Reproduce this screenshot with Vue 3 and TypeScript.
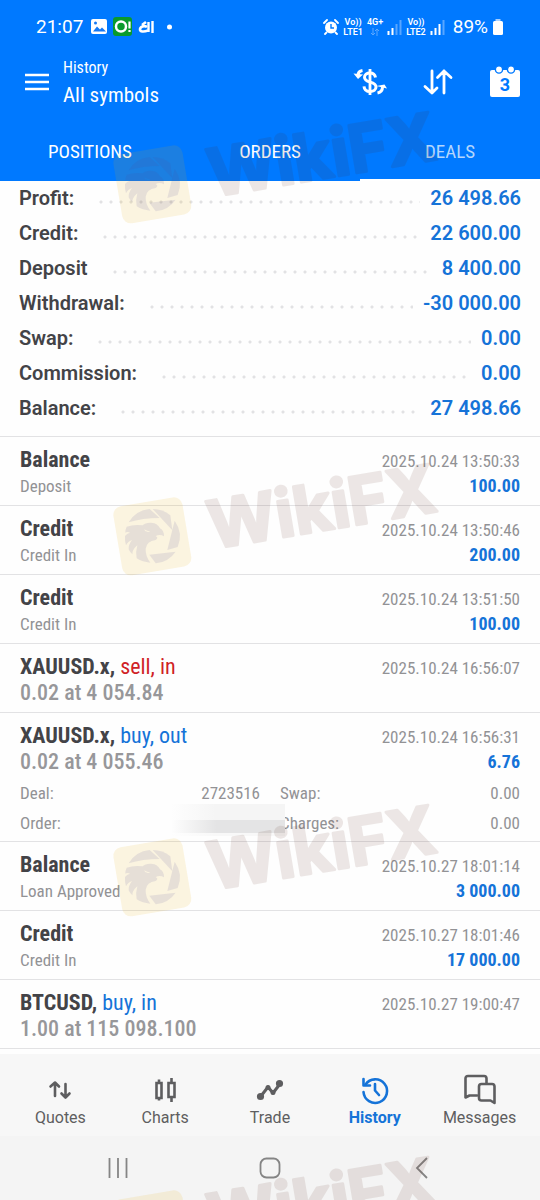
<script setup lang="ts">
import { ref } from 'vue'

interface SummaryLine {
  label: string
  value: string
}

interface Detail {
  label: string
  value: string
  hidden?: boolean
}

interface Deal {
  title: string
  action?: string
  side?: 'buy' | 'sell'
  note: string
  time: string
  amount?: string
  details?: Detail[]
}

const tabs = ['POSITIONS', 'ORDERS', 'DEALS']
const activeTab = ref('DEALS')

const summary: SummaryLine[] = [
  { label: 'Profit:', value: '26 498.66' },
  { label: 'Credit:', value: '22 600.00' },
  { label: 'Deposit', value: '8 400.00' },
  { label: 'Withdrawal:', value: '-30 000.00' },
  { label: 'Swap:', value: '0.00' },
  { label: 'Commission:', value: '0.00' },
  { label: 'Balance:', value: '27 498.66' },
]

const deals: Deal[] = [
  { title: 'Balance', note: 'Deposit', time: '2025.10.24 13:50:33', amount: '100.00' },
  { title: 'Credit', note: 'Credit In', time: '2025.10.24 13:50:46', amount: '200.00' },
  { title: 'Credit', note: 'Credit In', time: '2025.10.24 13:51:50', amount: '100.00' },
  { title: 'XAUUSD.x,', action: 'sell, in', side: 'sell', note: '0.02 at 4 054.84', time: '2025.10.24 16:56:07' },
  {
    title: 'XAUUSD.x,',
    action: 'buy, out',
    side: 'buy',
    note: '0.02 at 4 055.46',
    time: '2025.10.24 16:56:31',
    amount: '6.76',
    details: [
      { label: 'Deal:', value: '2723516' },
      { label: 'Swap:', value: '0.00' },
      { label: 'Order:', value: '', hidden: true },
      { label: 'Charges:', value: '0.00' },
    ],
  },
  { title: 'Balance', note: 'Loan Approved', time: '2025.10.27 18:01:14', amount: '3 000.00' },
  { title: 'Credit', note: 'Credit In', time: '2025.10.27 18:01:46', amount: '17 000.00' },
  { title: 'BTCUSD,', action: 'buy, in', side: 'buy', note: '1.00 at 115 098.100', time: '2025.10.27 19:00:47' },
]

const sections = ['Quotes', 'Charts', 'Trade', 'History', 'Messages']
const activeSection = ref('History')
const marks = [1, 2, 3, 4]
</script>

<template>
  <div class="screen">
    <header class="top">
      <div class="status">
        <span class="clock">21:07</span>
        <svg class="notices" width="84" height="20" viewBox="0 0 84 20" aria-hidden="true">
          <rect x="0" y="2" width="16" height="15" rx="2" fill="#fff" />
          <path d="M2 14.500l4-5 3 3 2-2 4 4z" fill="#1479f5" />
          <circle cx="4.500" cy="6" r="1.500" fill="#1479f5" />
          <rect x="22" y="0" width="19" height="19" rx="3" fill="#0a9a2c" />
          <circle cx="30" cy="9.500" r="5" fill="none" stroke="#fff" stroke-width="2.500" />
          <path d="M38.500 4.500v7M38.500 13v2" stroke="#fff" stroke-width="2.200" />
          <path d="M61.500 4v12M57.500 5v10" stroke="#fff" stroke-width="2.400" />
          <path d="M56 10c-3-2-7 0-7 2.500s4 2.500 8 1M51 8l4-3" fill="none" stroke="#fff" stroke-width="2.600" />
          <circle cx="78.500" cy="10" r="2.500" fill="#fff" />
        </svg>
        <span class="grow"></span>
        <svg class="alarm" width="16" height="16" viewBox="0 0 16 16" aria-hidden="true">
          <circle cx="8" cy="8.500" r="6" fill="#fff" />
          <path d="M1 4l3-3M15 4l-3-3M3.500 13.500L2 15M12.500 13.500L14 15" stroke="#fff" stroke-width="1.800" stroke-linecap="round" />
          <path d="M8 5v4h3" fill="none" stroke="#0079ff" stroke-width="1.400" />
        </svg>
        <span class="tiny">Vo))<br />LTE1</span>
        <span class="tiny net">4G+
          <svg width="10" height="8" viewBox="0 0 10 8" aria-hidden="true">
            <path d="M3 0v7M1 5l2 2 2-2M7 8V1M5 3l2-2 2 2" fill="none" stroke="#5ca8ff" />
          </svg>
        </span>
        <svg class="signal" width="15" height="16" viewBox="0 0 15 16" aria-hidden="true">
          <path d="M1.500 16v-4M5.500 16V9" stroke="#fff" stroke-width="2" />
          <path d="M9.500 16V5M13.500 16V1" stroke="#58a6ff" stroke-width="2" />
        </svg>
        <span class="tiny">Vo))<br />LTE2</span>
        <svg class="signal" width="15" height="16" viewBox="0 0 15 16" aria-hidden="true">
          <path d="M1.500 16v-4M5.500 16V9M9.500 16V5" stroke="#fff" stroke-width="2" />
          <path d="M13.500 16V1" stroke="#58a6ff" stroke-width="2" />
        </svg>
        <span class="clock charge">89%</span>
        <svg width="12" height="18" viewBox="0 0 12 18" aria-hidden="true">
          <path d="M3.500 1h5v2h-5z" fill="#a9d0ff" />
          <rect x="1" y="3" width="10" height="14" rx="1.500" fill="#fff" />
        </svg>
      </div>

      <div class="bar">
        <button class="icon-button" type="button" aria-label="Menu">
          <svg width="24" height="18" viewBox="0 0 24 18"><path d="M0 2h24M0 9h24M0 16h24" stroke="#fff" stroke-width="2.600" /></svg>
        </button>
        <h1 class="heading"><small>History</small>All symbols</h1>
        <div class="tools">
          <button class="icon-button" type="button" aria-label="Currency">
            <svg width="34" height="32" viewBox="0 0 34 32" fill="none" stroke="#fff" stroke-width="3">
              <path d="M22.500 11.500c-.5-3-2.500-4.500-5.500-4.500-3.300 0-5.500 1.700-5.500 4.300 0 3 2.700 4 5.700 4.800 3.300.9 5.800 1.900 5.800 5 0 2.700-2.500 4.400-5.800 4.400-3.500 0-5.900-1.900-6.200-5.200" />
              <path d="M17 3v26" stroke-width="2.800" />
              <path d="M9.500 4.500C6.500 5 5 7 5 9.500M24.500 27c4-.8 5-3 5-6" stroke-width="3" />
              <path d="M.5 7.500L5 13l5-4.500zM23.500 20l8-1.500 2.500 4z" fill="#fff" stroke="none" />
            </svg>
          </button>
          <button class="icon-button" type="button" aria-label="Sort">
            <svg width="30" height="28" viewBox="0 0 30 28" fill="none" stroke="#fff" stroke-width="2.800" stroke-linecap="round" stroke-linejoin="round">
              <path d="M9 3v22M2 18.500L9 25l5-5M21 25V3M14.500 9.500L21 3l7 6.500" />
            </svg>
          </button>
          <button class="icon-button" type="button" aria-label="Period">
            <svg width="32" height="34" viewBox="0 0 32 34">
              <rect x="1" y="5" width="30" height="27" rx="2" fill="#fff" />
              <g fill="#fff" stroke="#0079ff" stroke-width="1.400"><circle cx="10" cy="4.500" r="3.600" /><circle cx="22" cy="4.500" r="3.600" /></g>
              <text class="day" x="16" y="26" text-anchor="middle">3</text>
            </svg>
          </button>
        </div>
      </div>

      <nav class="tabs">
        <button
          v-for="tab in tabs"
          :key="tab"
          type="button"
          class="tab"
          :class="{ active: tab === activeTab }"
          @click="activeTab = tab"
        >{{ tab }}</button>
      </nav>
    </header>

    <main class="content">
      <dl class="summary">
        <div v-for="line in summary" :key="line.label" class="line">
          <dt>{{ line.label }}</dt>
          <span class="leader"></span>
          <dd>{{ line.value }}</dd>
        </div>
      </dl>

      <ul class="deals">
        <li v-for="deal in deals" :key="deal.time" class="deal">
          <div class="row">
            <span class="title"><b>{{ deal.title }}</b><span v-if="deal.action" :class="deal.side">&nbsp;{{ deal.action }}</span></span>
            <time class="time">{{ deal.time }}</time>
          </div>
          <div class="row second">
            <span :class="deal.side ? 'volume' : 'note'">{{ deal.note }}</span>
            <span v-if="deal.amount" class="amount">{{ deal.amount }}</span>
          </div>
          <dl v-if="deal.details" class="details">
            <div v-for="item in deal.details" :key="item.label" class="detail">
              <dt>{{ item.label }}</dt>
              <dd>{{ item.value }}<span v-if="item.hidden" class="mask"></span></dd>
            </div>
          </dl>
        </li>
      </ul>
    </main>

    <nav class="sections">
      <button
        v-for="name in sections"
        :key="name"
        type="button"
        class="section"
        :class="{ active: name === activeSection }"
        @click="activeSection = name"
      >
        <svg width="36" height="32" viewBox="0 0 36 32" fill="none" stroke="currentColor" stroke-width="2.600" stroke-linecap="round" stroke-linejoin="round" aria-hidden="true">
          <path v-if="name === 'Quotes'" d="M13 22V9M8.500 12.500L13 8.500l4 4M23.500 10v13M19.500 19.500l4 4 4-4" />
          <g v-else-if="name === 'Charts'" stroke-linecap="butt" stroke-linejoin="miter">
            <path d="M9.500 9h5v15h-5zM12 5.500V9M12 24v2.500M21.500 9h6v14h-6zM24.500 4v5M24.500 23v5" />
          </g>
          <g v-else-if="name === 'Trade'">
            <path d="M9 22l7-9 5 6 7-9" stroke-width="3" />
            <g fill="currentColor" stroke-width="2"><circle cx="8.500" cy="22.500" r="2.600" /><circle cx="16" cy="13.500" r="1.500" /><circle cx="21" cy="18.500" r="1.500" /><circle cx="27.500" cy="9.500" r="2.600" /></g>
          </g>
          <g v-else-if="name === 'History'">
            <path d="M8.500 10.500A11.800 11.800 0 1 1 6.500 18" />
            <path d="M6.500 5v6.500H13M18 10v6.500l4 4.500" />
          </g>
          <g v-else>
            <path d="M15 21.500H7.500L3.500 23.500V4.500Q3.500 2 6 2H22q2.500 0 2.500 2.500V9" />
            <path d="M19.500 10h10.500q2.500 0 2.500 2.500V29l-4-2.500h-9q-2.500 0-2.500-2.500V12.500q0-2.500 2.500-2.500z" />
          </g>
        </svg>
        <span>{{ name }}</span>
      </button>
    </nav>

    <div class="system">
      <button type="button" aria-label="Recent apps">
        <svg width="22" height="22" viewBox="0 0 22 22"><path d="M2.500 1v20M11 1v20M19.500 1v20" stroke="#858585" stroke-width="1.800" /></svg>
      </button>
      <button type="button" aria-label="Home">
        <svg width="22" height="22" viewBox="0 0 22 22"><rect x="1.500" y="1.500" width="19" height="19" rx="6" fill="none" stroke="#858585" stroke-width="1.800" /></svg>
      </button>
      <button type="button" aria-label="Back">
        <svg width="22" height="22" viewBox="0 0 22 22"><path d="M16 1L6 11l10 10" fill="none" stroke="#858585" stroke-width="1.800" /></svg>
      </button>
    </div>

    <div class="marks" aria-hidden="true">
      <svg v-for="n in marks" :key="n" class="mark" width="440" height="220" viewBox="0 -40 440 220">
        <g transform="translate(10 49) scale(.3333)">
          <rect x="22" y="28" width="210" height="210" rx="26" transform="rotate(-9.500 127 133)" fill="#e6ac05" fill-opacity=".12" />
          <g fill="#50469a" fill-opacity=".12">
            <path d="M56 91A82 82 0 0 1 119 51L149 78Q98 78 56 91z" />
            <path d="M128 51A82 82 0 0 1 181 70L187 115z" />
            <path d="M194 86A82 82 0 0 1 203 165L172 174z" />
            <path d="M118 188L197 179A82 82 0 0 1 137 214z" />
            <path d="M50 104Q72 96 98 100Q106 91 124 92Q144 94 150 109Q162 115 162 133Q150 126 137 132Q147 137 137 144Q110 148 107 170Q106 192 121 212Q98 210 80 199Q76 180 82 160Q66 174 67 187Q60 181 56 172Q55 158 66 144Q52 150 48 160Q44 146 45 132Q50 125 60 122Q52 118 46 122Q46 112 50 104zM102 112Q106 123 121 119Q112 117 102 112z" fill-rule="evenodd" />
          </g>
        </g>
        <text class="brand" transform="translate(112 106) rotate(-9.500)">WikiFX</text>
      </svg>
    </div>
  </div>
</template>

<style>
body {
  margin: 0;
  background: #fefefe;
}
</style>

<style scoped>
.screen {
  position: relative;
  display: flex;
  flex-direction: column;
  min-height: 100vh;
  overflow: hidden;
  background: #fefefe;
  color: #434347;
  font-family: Roboto, "Liberation Sans", sans-serif;
}

button {
  margin: 0;
  padding: 0;
  border: 0;
  background: none;
  color: inherit;
  font: inherit;
  cursor: pointer;
}

svg {
  display: block;
  flex: none;
}

dl, dd, ul, h1 {
  margin: 0;
  padding: 0;
}

.top {
  background: #0079ff;
  color: #fff;
}

.status {
  display: flex;
  align-items: center;
  gap: 4px;
  padding: 14px 36px 0;
  height: 26px;
}

.clock {
  font-size: 19px;
  line-height: 26px;
}

.notices {
  margin-left: 4px;
}

.grow {
  flex: 1;
}

.tiny {
  font-size: 9px;
  line-height: 10px;
  font-weight: 600;
  text-align: center;
}

.net svg {
  margin: 1px auto;
}

.charge {
  margin-left: 4px;
}

.bar {
  display: flex;
  align-items: center;
  padding: 15px 19px 9px 25px;
}

.icon-button {
  display: flex;
}

.heading {
  flex: 1;
  margin-left: 14px;
  font-family: "Roboto Condensed", "Liberation Sans Narrow", Roboto, sans-serif;
  font-size: 21px;
  line-height: 28px;
  font-weight: 400;
}

.heading small {
  display: block;
  font-size: 16px;
  line-height: 26px;
}

.tools {
  display: flex;
  align-items: center;
  gap: 36px;
}

.day {
  fill: #0079ff;
  font-family: Roboto, sans-serif;
  font-size: 18px;
  font-weight: 700;
}

.tabs {
  display: grid;
  grid-template-columns: repeat(3, 1fr);
}

.tab {
  padding: 20px 0 14px;
  border-bottom: 2px solid #0079ff;
  font-family: "Roboto Condensed", "Liberation Sans Narrow", Roboto, sans-serif;
  font-size: 19px;
  line-height: 27px;
}

.tab.active {
  border-color: #fff;
  color: #b4d6fc;
}

.content {
  flex: 1;
}

.summary {
  padding: 0 19px 10px;
  font-size: 20px;
  line-height: 35px;
  font-weight: 600;
}

.line {
  display: flex;
}

.leader {
  flex: 1;
  margin: 0 10px 0 22px;
  background: radial-gradient(circle at 5px 21px, #e2e2e4 1px, transparent 2px) 0 0 / 10px 35px repeat-x;
}

.line dd {
  color: #1573d8;
}

.deals {
  border-top: 1px solid #e2e2e4;
  list-style: none;
  font-family: "Roboto Condensed", "Liberation Sans Narrow", Roboto, sans-serif;
  font-size: 17px;
}

.deal {
  padding: 10px 20px 7px;
  border-bottom: 1px solid #e2e2e4;
}

.row {
  display: flex;
  justify-content: space-between;
  align-items: baseline;
  line-height: 25px;
}

.second {
  align-items: center;
  line-height: 24px;
}

.title {
  font-size: 22px;
}

.buy {
  color: #1573d8;
}

.sell {
  color: #d01f26;
}

.time, .note, .details {
  color: #929295;
}

.volume {
  color: #97979a;
  font-size: 22px;
  font-weight: 500;
}

.amount {
  color: #1573d8;
  font-size: 18px;
  font-weight: 700;
}

.details {
  display: grid;
  grid-template-columns: 1fr 1fr;
  column-gap: 20px;
  margin-bottom: -4px;
  padding-top: 4px;
  line-height: 30px;
}

.detail {
  display: flex;
  justify-content: space-between;
}

.detail dd {
  position: relative;
}

.mask {
  position: absolute;
  top: -4px;
  right: -25px;
  width: 114px;
  height: 32px;
  background:
    linear-gradient(90deg, #fefefe, transparent 40%),
    linear-gradient(#f5f5f5 50%, #e4e4e5 50%, #e4e4e5 90%, #f8f8f8 90%);
}

.sections {
  display: grid;
  grid-template-columns: repeat(5, 1fr);
  padding: 20px 8px 6px;
  background: #f7f7f7;
  color: #5e5e60;
  font-size: 16px;
  line-height: 24px;
}

.section {
  display: flex;
  flex-direction: column;
  align-items: center;
}

.section.active {
  color: #1573d8;
  font-weight: 700;
}

.system {
  display: flex;
  justify-content: space-between;
  padding: 21px 107px;
  background: #f4f4f4;
}

.marks {
  position: absolute;
  inset: 0;
  overflow: hidden;
  pointer-events: none;
}

.mark {
  position: absolute;
  left: 100px;
  top: 51px;
}

.mark:nth-child(2) {
  top: 403px;
}

.mark:nth-child(3) {
  top: 744px;
}

.mark:nth-child(4) {
  top: 1096px;
}

.brand {
  fill: #552314;
  stroke: #552314;
  stroke-width: 3px;
  stroke-linejoin: round;
  opacity: .1;
  font-family: Inter, sans-serif;
  font-size: 66px;
  font-weight: 700;
}
</style>
